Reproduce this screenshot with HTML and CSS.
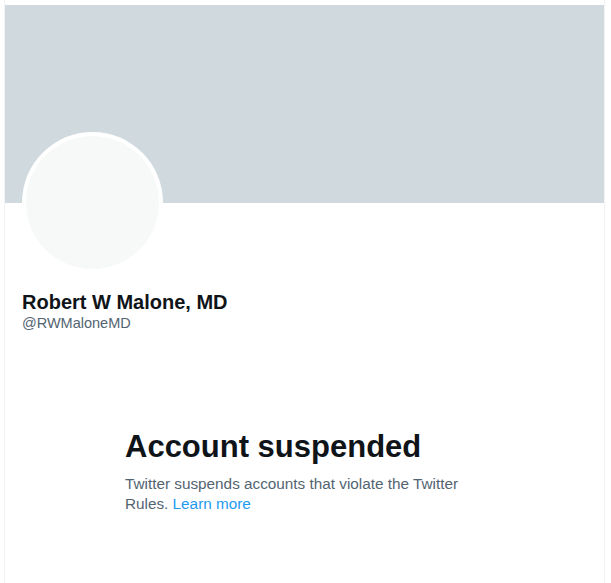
FILE: index.html
```html
<!DOCTYPE html>
<html>
<head>
<meta charset="utf-8">
<link rel="stylesheet" href="styles.css">
</head>
<body>
<div class="column">
  <div class="banner"></div>
  <div class="profile">
    <div class="avatar"><div class="avatar-inner"></div></div>
    <div class="name">Robert W Malone, MD</div>
    <div class="handle">@RWMaloneMD</div>
  </div>
  <div class="notice">
    <h1 class="notice-title">Account suspended</h1>
    <p class="notice-text">Twitter suspends accounts that violate the Twitter Rules. <a class="link" href="#">Learn more</a></p>
  </div>
</div>
</body>
</html>
```

FILE: styles.css
```css
html, body {
  margin: 0;
  padding: 0;
  background: #ffffff;
}
body {
  font-family: "Liberation Sans", Arial, sans-serif;
  color: #0f1419;
}
.column {
  margin-left: 4px;
  width: 599px;
  min-height: 583px;
  border-left: 1px solid #eff3f4;
  border-right: 1px solid #eff3f4;
  padding-top: 5px;
  box-sizing: content-box;
}
.banner {
  height: 198px;
  background: #cfd9de;
}
.profile {
  padding: 0 17px;
}
.avatar {
  width: 141px;
  height: 141px;
  margin-top: -71px;
  border-radius: 50%;
  background: #ffffff;
  padding: 4px;
  box-sizing: border-box;
}
.avatar-inner {
  width: 100%;
  height: 100%;
  border-radius: 50%;
  background: #f7f9f9;
}
.name {
  margin-top: 17px;
  font-size: 20px;
  font-weight: 700;
  line-height: 24px;
  color: #0f1419;
}
.handle {
  font-size: 14.5px;
  line-height: 19px;
  color: #536471;
}
.notice {
  margin-left: 120px;
  width: 350px;
  padding-top: 96px;
}
.notice-title {
  margin: 0;
  font-size: 31px;
  font-weight: 800;
  line-height: 36px;
  color: #0f1419;
}
.notice-text {
  margin: 9px 0 0 0;
  font-size: 15.3px;
  line-height: 20px;
  color: #536471;
}
.link {
  color: #1d9bf0;
  text-decoration: none;
}
```
